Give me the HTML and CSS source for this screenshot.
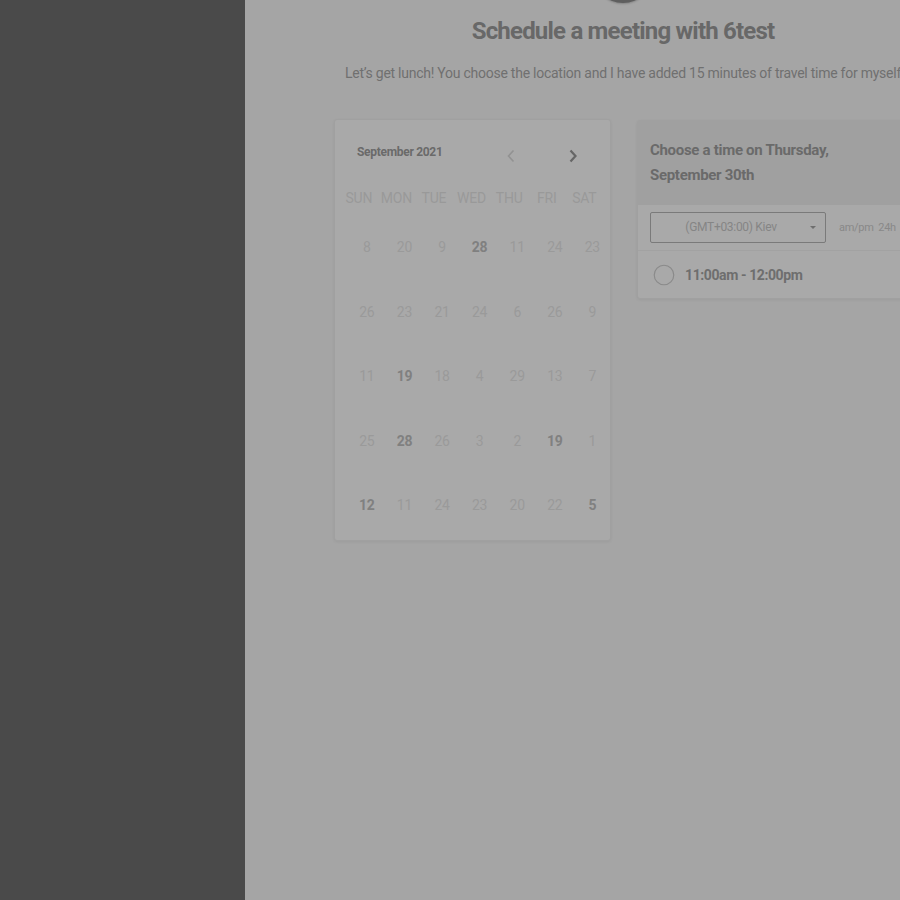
FILE: index.html
```html
<!DOCTYPE html>
<html>
<head>
<meta charset="utf-8">
<link rel="stylesheet" href="styles.css">
</head>
<body>
<div class="app">
  <aside class="side"></aside>
  <main class="main">
    <div class="avatar"></div>
    <h1 class="title">Schedule a meeting with 6test</h1>
    <p class="sub">Let’s get lunch! You choose the location and I have added 15 minutes of travel time for myself</p>
    <div class="cards">
      <section class="cal">
        <div class="cal-head">
          <span class="month">September 2021</span>
          <span class="navs">
            <svg class="nav prev" width="10" height="14" viewBox="0 0 10 14"><path d="M7.5 1.5 L2.5 7 L7.5 12.5" fill="none" stroke="currentColor" stroke-width="1.6"/></svg>
            <svg class="nav next" width="10" height="14" viewBox="0 0 10 14"><path d="M2.5 1.5 L7.5 7 L2.5 12.5" fill="none" stroke="currentColor" stroke-width="2.2"/></svg>
          </span>
        </div>
        <div class="grid">
          <span class="dow">SUN</span><span class="dow">MON</span><span class="dow">TUE</span><span class="dow">WED</span><span class="dow">THU</span><span class="dow">FRI</span><span class="dow">SAT</span>
          <span>8</span><span>20</span><span>9</span><span class="on">28</span><span>11</span><span>24</span><span>23</span>
          <span>26</span><span>23</span><span>21</span><span>24</span><span>6</span><span>26</span><span>9</span>
          <span>11</span><span class="on">19</span><span>18</span><span>4</span><span>29</span><span>13</span><span>7</span>
          <span>25</span><span class="on">28</span><span>26</span><span>3</span><span>2</span><span class="on">19</span><span>1</span>
          <span class="on">12</span><span>11</span><span>24</span><span>23</span><span>20</span><span>22</span><span class="on">5</span>
        </div>
      </section>
      <section class="times">
        <div class="times-head">Choose a time on Thursday, September 30th</div>
        <div class="tz-row">
          <div class="tz">(GMT+03:00) Kiev<span class="caret"></span></div>
          <span class="fmt">am/pm&nbsp;&nbsp;24h</span>
        </div>
        <div class="slot">
          <span class="radio"></span>
          <span class="slot-text">11:00am - 12:00pm</span>
        </div>
      </section>
    </div>
  </main>
</div>
</body>
</html>
```

FILE: styles.css
```css
html, body {
  margin: 0;
  padding: 0;
  width: 900px;
  height: 900px;
  overflow: hidden;
  background: #a5a5a5;
  font-family: Roboto, "Liberation Sans", sans-serif;
}

.app {
  display: flex;
  height: 900px;
}

.side {
  flex: 0 0 245px;
  background: #4a4a4a;
}

.main {
  flex: 0 0 756px;
  width: 756px;
  display: flex;
  flex-direction: column;
  align-items: center;
  background: #a5a5a5;
}

.avatar {
  width: 60px;
  height: 60px;
  border-radius: 50%;
  background: #5e5e5e;
  margin-top: -57px;
  box-shadow: 0 1px 2px rgba(0,0,0,0.2);
}

.title {
  margin: 13px 0 0;
  font-size: 24px;
  line-height: 30px;
  font-weight: 700;
  color: #686868;
  letter-spacing: -0.8px;
}

.sub {
  margin: 18px 0 0;
  font-size: 14px;
  line-height: 18px;
  color: #707070;
  letter-spacing: -0.25px;
  white-space: nowrap;
}

.cards {
  display: flex;
  align-items: flex-start;
  gap: 26px;
  margin-top: 36px;
  width: 578px;
}

.cal {
  width: 275px;
  flex: 0 0 auto;
  height: 420px;
  margin-top: 1px;
  background: #a9a9a9;
  border: 1px solid #a0a0a0;
  border-radius: 3px;
  box-shadow: 0 1px 3px rgba(0,0,0,0.06);
  box-sizing: content-box;
}

.cal-head {
  display: flex;
  align-items: center;
  padding: 22px 0 0 22px;
  height: 20px;
}

.month {
  font-size: 12px;
  font-weight: 700;
  color: #6a6a6a;
  letter-spacing: -0.3px;
}

.navs {
  display: flex;
  gap: 52px;
  margin-left: 63px;
  margin-top: 8px;
}

.nav.prev { color: #929292; }
.nav.next { color: #666666; }

.grid {
  display: grid;
  grid-template-columns: repeat(7, 37.6px);
  grid-template-rows: 26px repeat(5, 64.5px);
  margin: 23px 0 0 5px;
  align-items: center;
  justify-items: center;
}

.grid span {
  font-size: 14px;
  color: #9a9a9a;
  letter-spacing: -0.3px;
}

.grid .dow {
  font-size: 14px;
  color: #999999;
  letter-spacing: -0.2px;
  align-self: center;
}

.grid span:nth-child(n+8) {
  transform: translate(8px, 4px);
}

.grid .on {
  color: #808080;
  font-weight: 700;
}

.times {
  width: 275px;
  flex: 0 0 275px;
  margin-top: 2px;
  background: #a9a9a9;
  border: 1px solid #a0a0a0;
  border-radius: 3px;
  box-shadow: 0 1px 3px rgba(0,0,0,0.06);
}

.times-head {
  background: #a0a0a0;
  padding: 17px 40px 17px 12px;
  font-size: 15px;
  line-height: 25px;
  font-weight: 700;
  color: #6a6a6a;
  letter-spacing: -0.3px;
  height: 50px;
}

.tz-row {
  display: flex;
  align-items: center;
  padding: 7px 0 7px 12px;
  border-bottom: 1px solid #a2a2a2;
}

.tz {
  position: relative;
  width: 176px;
  height: 31px;
  border: 1px solid #7a7a7a;
  border-radius: 2px;
  font-size: 12px;
  line-height: 29px;
  color: #858585;
  text-align: center;
  letter-spacing: -0.3px;
  box-sizing: border-box;
  padding-right: 14px;
}

.caret {
  position: absolute;
  right: 9px;
  top: 13px;
  width: 0;
  height: 0;
  border-left: 3px solid transparent;
  border-right: 3px solid transparent;
  border-top: 3px solid #6e6e6e;
}

.fmt {
  margin-left: 13px;
  font-size: 11px;
  color: #888888;
  letter-spacing: -0.3px;
  white-space: nowrap;
}

.slot {
  display: flex;
  align-items: center;
  height: 47px;
  padding-left: 17px;
}

.radio {
  width: 18px;
  height: 18px;
  border: 1.5px solid #8a8a8a;
  border-radius: 50%;
  box-sizing: border-box;
  transform: scale(1.15);
}

.slot-text {
  margin-left: 12px;
  font-size: 14px;
  font-weight: 700;
  color: #6e6e6e;
  letter-spacing: -0.4px;
}
```
